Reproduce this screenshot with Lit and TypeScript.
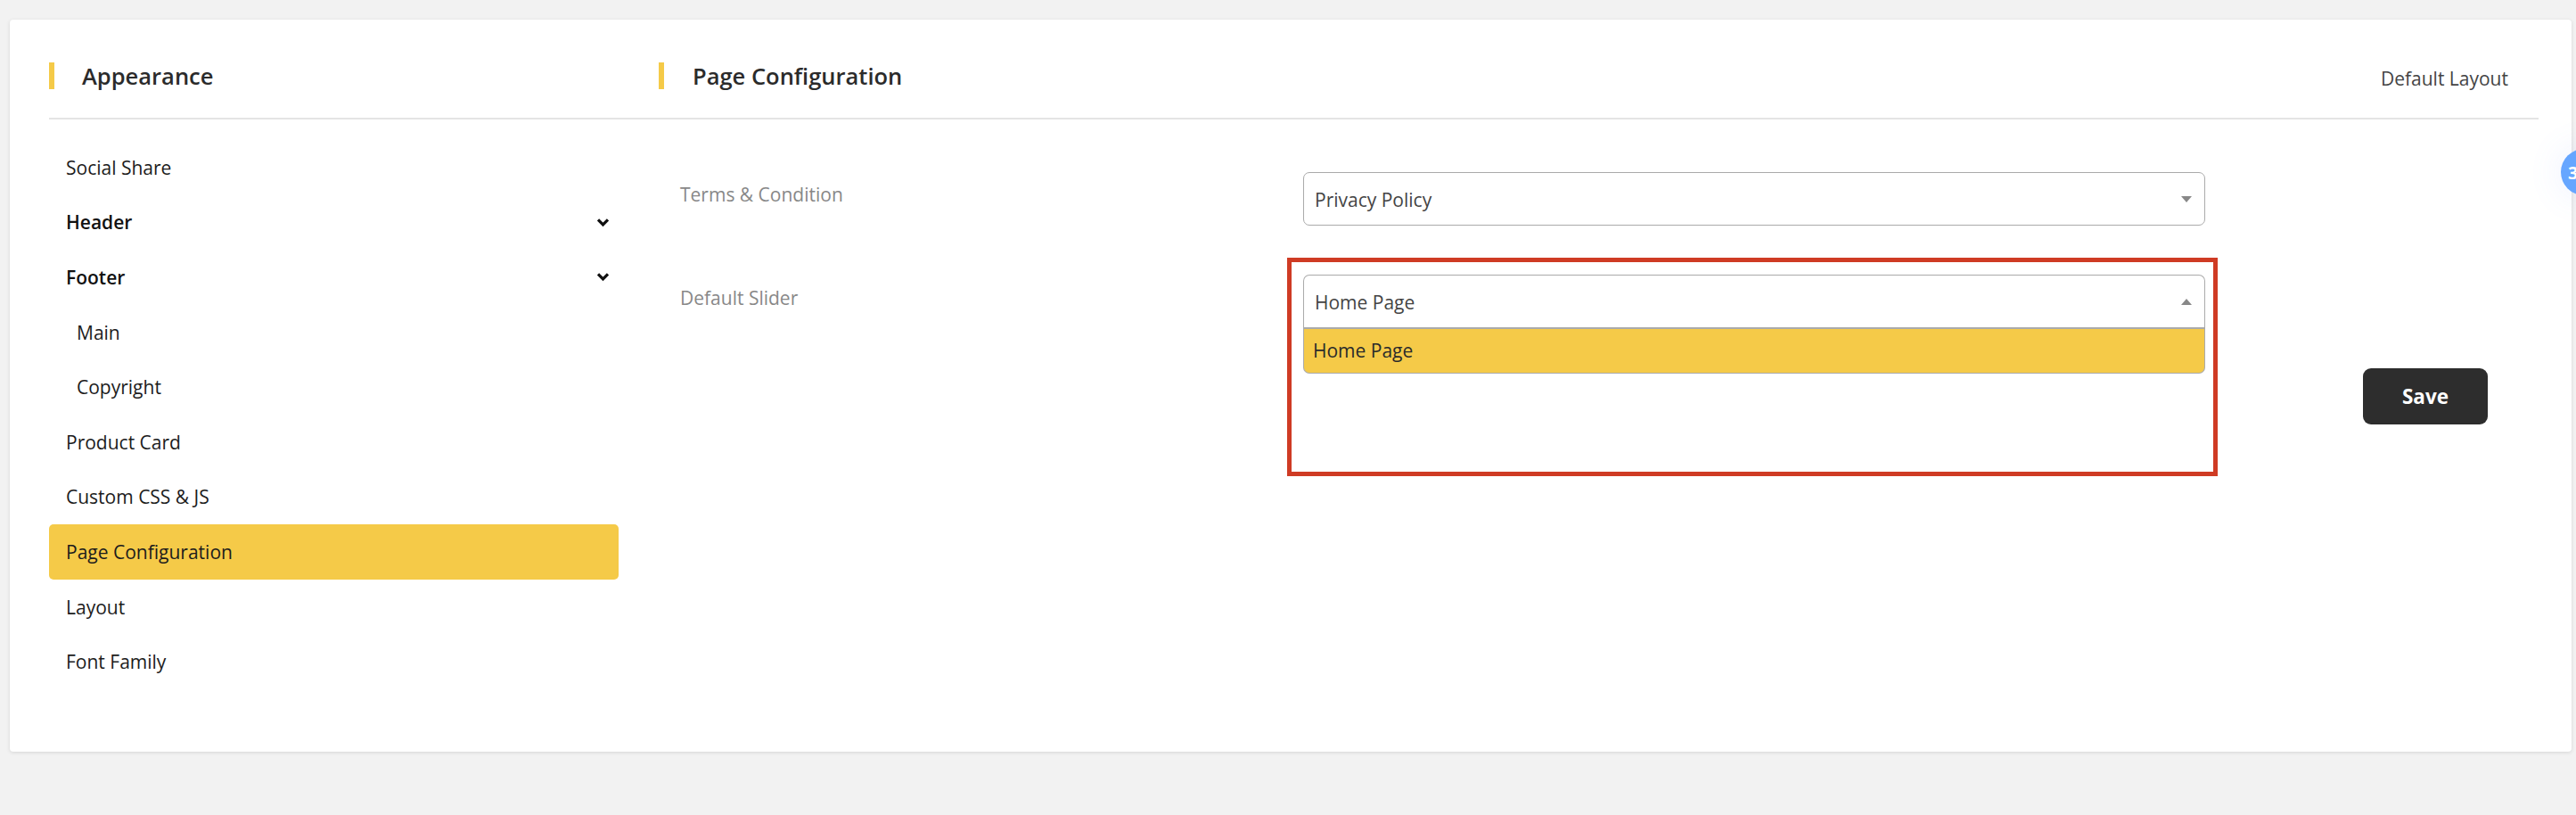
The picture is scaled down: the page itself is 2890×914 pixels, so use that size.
import { LitElement, html, css } from "lit";
import { customElement } from "lit/decorators.js";

const chevron = html`<svg class="chev" width="15" height="11" viewBox="0 0 15 11"><path d="M2 2.4 L7.5 7.9 L13 2.4" fill="none" stroke="#111" stroke-width="3.2"/></svg>`;

@customElement("app-root")
export class AppRoot extends LitElement {
  static styles = css`
    :host { display: block; position: relative; height: 914px; overflow: hidden; background: #f2f2f2; font-family: "Open Sans", sans-serif; color: #222; }
    .page { padding: 22px 5px 0 11px; }
    .card { height: 821px; box-sizing: border-box; background: #fff; border-radius: 4px; box-shadow: 0 1px 4px rgba(0,0,0,.12); padding: 0 37px 0 44px; }
    .head { display: flex; height: 112px; box-sizing: border-box; border-bottom: 2px solid #e4e4e4; padding-top: 48px; }
    .head-left { width: 684px; }
    .title { display: flex; align-items: center; height: 30px; border-left: 6px solid #f5ca48; padding-left: 31px; font-size: 25.5px; font-weight: 600; color: #2b2b2b; }
    .head-right { flex: 1; display: flex; justify-content: space-between; }
    .head-right .title { padding-left: 32px; }
    .layout-link { font-size: 21px; color: #444; padding-right: 34px; line-height: 36px; }
    .body { display: flex; }
    .side { width: 639px; margin-right: 45px; padding-top: 23px; flex: none; }
    .item { height: 61.6px; display: flex; align-items: center; justify-content: space-between; box-sizing: border-box; padding: 0 10px 0 19px; font-size: 21px; color: #1c1c1c; border-radius: 5px; }
    .item.bold { font-weight: 600; color: #111; }
    .item.sub { padding-left: 31px; }
    .item.active { background: #f5ca48; }
    .main { flex: 1; display: flex; }
    .form { padding: 59px 0 0 24px; display: grid; grid-template-columns: 699px 1012px; grid-auto-rows: min-content; row-gap: 55px; align-content: start; }
    .label { font-size: 21px; color: #888; line-height: 50px; }
    .label.low { line-height: 53px; }
    .select { position: relative; }
    .box { height: 60px; box-sizing: border-box; border: 1.5px solid #aaa; border-radius: 7px; display: flex; align-items: center; justify-content: space-between; padding: 1px 14px 0 12px; font-size: 21px; color: #444; }
    .open .box { border-radius: 7px 7px 0 0; border-bottom: 0; height: 59px; }
    .option { height: 52px; box-sizing: border-box; background: #f5ca48; border: 1.5px solid #aaa; border-top-width: 2px; border-radius: 0 0 7px 7px; display: flex; align-items: center; padding: 0 0 2px 10px; font-size: 21px; color: #2b2b2b; }
    .arrow { width: 0; height: 0; border-left: 6px solid transparent; border-right: 6px solid transparent; border-top: 7px solid #888; }
    .arrow.up { border-top: 0; border-bottom: 7px solid #888; }
    .mark { position: absolute; top: -19px; left: -18px; right: -14px; height: 245px; box-sizing: border-box; border: 5px solid #cf3b24; pointer-events: none; }
    .actions { padding: 279px 0 0 177px; }
    .save { width: 140px; height: 63px; border: 0; border-radius: 9px; background: #2d2d2d; color: #fff; font: 700 22.5px "Open Sans", sans-serif; }
    .bubble { position: absolute; left: 2873px; top: 167px; width: 52px; height: 52px; border-radius: 50%; background: #66a6ff; color: #fff; font-size: 20px; font-weight: 700; display: flex; align-items: center; padding-left: 8px; box-sizing: border-box; box-shadow: 0 0 40px rgba(102,130,255,.12); }
  `;

  render() {
    return html`
      <div class="page">
        <div class="card">
          <div class="head">
            <div class="head-left"><div class="title">Appearance</div></div>
            <div class="head-right">
              <div class="title">Page Configuration</div>
              <div class="layout-link">Default Layout</div>
            </div>
          </div>
          <div class="body">
            <nav class="side">
              <div class="item">Social Share</div>
              <div class="item bold">Header ${chevron}</div>
              <div class="item bold">Footer ${chevron}</div>
              <div class="item sub">Main</div>
              <div class="item sub">Copyright</div>
              <div class="item">Product Card</div>
              <div class="item">Custom CSS &amp; JS</div>
              <div class="item active">Page Configuration</div>
              <div class="item">Layout</div>
              <div class="item">Font Family</div>
            </nav>
            <div class="main">
              <div class="form">
                <div class="label">Terms &amp; Condition</div>
                <div class="select">
                  <div class="box"><span>Privacy Policy</span><span class="arrow"></span></div>
                </div>
                <div class="label low">Default Slider</div>
                <div class="select open">
                  <div class="box"><span>Home Page</span><span class="arrow up"></span></div>
                  <div class="option">Home Page</div>
                  <div class="mark"></div>
                </div>
              </div>
              <div class="actions"><button class="save">Save</button></div>
            </div>
          </div>
        </div>
      </div>
      <div class="bubble">3</div>
    `;
  }
}
